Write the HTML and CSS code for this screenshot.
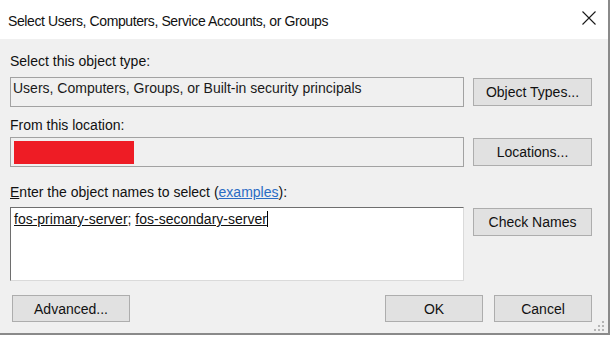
FILE: index.html
```html
<!DOCTYPE html>
<html lang="en">
<head>
    <meta charset="UTF-8">
    <title>Select Users, Computers, Service Accounts, or Groups</title>
    <link rel="stylesheet" href="styles.css">
</head>
<body>
<div class="dialog">
    <div class="titlebar">
        <span class="title">Select Users, Computers, Service Accounts, or Groups</span>
        <svg class="close" width="14" height="14" viewBox="0 0 14 14">
            <path d="M0.5 0.5 L13.5 13.5 M13.5 0.5 L0.5 13.5" stroke="#1a1a1a" stroke-width="1.1" fill="none"/>
        </svg>
    </div>
    <div class="content">
        <div class="label label-type">Select this object type:</div>
        <div class="row">
            <div class="field readonly">Users, Computers, Groups, or Built-in security principals</div>
            <button class="btn side">Object Types...</button>
        </div>

        <div class="label label-location">From this location:</div>
        <div class="row">
            <div class="field readonly"><span class="redacted"></span></div>
            <button class="btn side">Locations...</button>
        </div>

        <div class="label label-names"><u>E</u>nter the object names to select (<a href="#">examples</a>):</div>
        <div class="row row-top">
            <div class="names">
                <span class="name">fos-primary-server</span>; <span class="name last">fos-secondary-server</span>
            </div>
            <button class="btn side check">Check Names</button>
        </div>

        <div class="footer">
            <button class="btn advanced">Advanced...</button>
            <span class="spacer"></span>
            <button class="btn small">OK</button>
            <button class="btn small">Cancel</button>
        </div>

        <!-- size grip -->
        <svg class="grip" width="10" height="10" viewBox="0 0 10 10" fill="#b5b5b5">
            <rect x="8" y="0" width="2" height="2"/>
            <rect x="4" y="4" width="2" height="2"/><rect x="8" y="4" width="2" height="2"/>
            <rect x="0" y="8" width="2" height="2"/><rect x="4" y="8" width="2" height="2"/><rect x="8" y="8" width="2" height="2"/>
        </svg>
    </div>
</div>
</body>
</html>
```

FILE: styles.css
```css
body {
    margin: 0;
    background: #fff;
    font-family: "Liberation Sans", Arial, sans-serif;
    font-size: 14px;
    color: #000;
}
.dialog {
    width: 608px;
    height: 333px;
    border-right: 2px solid #8a8a8a;
    border-bottom: 2px solid #8a8a8a;
    display: flex;
    flex-direction: column;
}
.titlebar {
    height: 39px;
    background: #fff;
    display: flex;
    align-items: center;
    padding: 0 12px 0 8px;
    flex-shrink: 0;
}
.title {
    font-size: 14px;
    letter-spacing: -0.4px;
    color: #111;
    flex: 1;
    margin-top: 2px;
}
.close {
    margin-top: -4px;
}
.content {
    flex: 1;
    background: #f0f0f0;
    padding: 14px 16px 0 10px;
    position: relative;
}
.label {
    line-height: 16px;
    height: 16px;
    color: #111;
}
.label-type { margin-bottom: 8px; }
.label-location { margin-top: 10px; margin-bottom: 4px; }
.label-names { margin-top: 17px; margin-bottom: 7px; }
.label a {
    color: #2a6cc4;
}
.row {
    display: flex;
    align-items: center;
    gap: 9px;
}
.row-top {
    align-items: flex-start;
}
.field {
    width: 454px;
    height: 30px;
    box-sizing: border-box;
    border: 1px solid #a2a2a2;
    padding: 2px 3px 0 2px;
    line-height: 16px;
    color: #1a1a1a;
    white-space: nowrap;
    overflow: hidden;
}
.readonly {
    background: #f0f0f0;
}
.redacted {
    display: block;
    width: 120px;
    height: 23px;
    margin: 1px 0 0 1px;
    background: #ee1c25;
}
.names {
    width: 454px;
    height: 74px;
    box-sizing: border-box;
    background: #fff;
    border-top: 1px solid #6e6e6e;
    border-left: 1px solid #6e6e6e;
    border-right: 1px solid #dadada;
    border-bottom: 1px solid #dadada;
    padding: 3px 3px 0 3px;
    line-height: 16px;
    color: #111;
}
.name {
    text-decoration: underline;
}
.name.last {
    border-right: 1px solid #000;
}
.btn {
    font-family: "Liberation Sans", Arial, sans-serif;
    font-size: 14px;
    color: #111;
    background: #e1e1e1;
    border: 1px solid #adadad;
    border-radius: 0;
    height: 28px;
    padding: 0;
    margin: 0;
}
.side {
    width: 119px;
}
.check {
    margin-top: 1px;
}
.footer {
    display: flex;
    align-items: center;
    margin-top: 14px;
    gap: 11px;
}
.footer .btn {
    height: 27px;
}
.advanced {
    width: 118px;
    margin-left: 2px;
}
.spacer {
    flex: 1;
}
.small {
    width: 98px;
}
.grip {
    position: absolute;
    right: 4px;
    bottom: 2px;
}
```
